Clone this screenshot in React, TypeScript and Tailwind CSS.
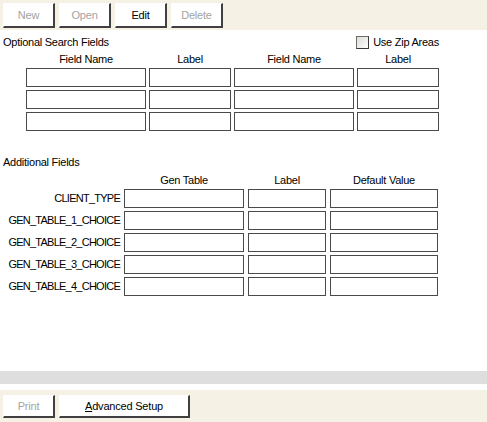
import React from 'react';

const font = { fontFamily: '"Liberation Sans", Arial, sans-serif' };

const Btn = ({ label, disabled, width, height = 'h-[25px]', children }: { label?: string; disabled?: boolean; width: string; height?: string; children?: React.ReactNode }) => (
  <button
    className={`${width} ${height} bg-white border-t border-l border-t-white border-l-white border-r-2 border-b-2 border-r-[#404040] border-b-[#404040] text-[11px] leading-none tracking-[-0.2px] ${disabled ? 'text-[#a3a3a3]' : 'text-black'}`}
    style={font}
  >
    {children ?? label}
  </button>
);

const Field = ({ w }: { w: string }) => <div className={`${w} h-[19px] border border-[#4a4a4a] bg-white`} />;

const searchCols = ['w-[120px]', 'w-[82px]', 'w-[120px]', 'w-[82px]'];
const searchHeads = ['Field Name', 'Label', 'Field Name', 'Label'];
const extraRows = ['CLIENT_TYPE', 'GEN_TABLE_1_CHOICE', 'GEN_TABLE_2_CHOICE', 'GEN_TABLE_3_CHOICE', 'GEN_TABLE_4_CHOICE'];

export default function App() {
  return (
    <div className="w-[487px] h-[422px] flex flex-col bg-white text-[11px] tracking-[-0.25px] text-black overflow-hidden" style={font}>
      {/* top toolbar */}
      <div className="h-[30px] bg-[#f5f1e5] flex items-start gap-[4px] pl-[3px] pt-[3px]">
        <Btn label="New" disabled width="w-[52px]" />
        <Btn label="Open" disabled width="w-[52px]" />
        <Btn label="Edit" width="w-[52px]" />
        <Btn label="Delete" disabled width="w-[52px]" />
      </div>

      <div className="flex-1">
        <div className="flex items-center h-[16px] mt-[4px] pl-[3px]">
          <span>Optional Search Fields</span>
          <div className="ml-auto mr-[48px] flex items-center gap-[4px]">
            <span className="w-[13px] h-[13px] border border-[#6e6e6e] border-r-[#3a3a3a] border-b-[#3a3a3a] bg-gradient-to-br from-[#dcdcd7] to-white" />
            <span>Use Zip Areas</span>
          </div>
        </div>

        <div className="ml-[26px] mt-[3px] grid grid-cols-[120px_82px_120px_82px] gap-x-[3px] gap-y-[3px]">
          {searchHeads.map((h, i) => (
            <div key={i} className="h-[12px] leading-[12px] text-center">{h}</div>
          ))}
          {[0, 1, 2].map(r =>
            searchCols.map((w, i) => <Field key={`${r}-${i}`} w={w} />)
          )}
        </div>

        <div className="pl-[3px] mt-[24px] h-[14px] leading-[14px]">Additional Fields</div>

        <div className="mt-[5px] grid grid-cols-[120px_120px_78px_108px] gap-x-[4px] gap-y-[3px]">
          <div />
          <div className="h-[12px] leading-[12px] text-center">Gen Table</div>
          <div className="h-[12px] leading-[12px] text-center">Label</div>
          <div className="h-[12px] leading-[12px] text-center">Default Value</div>
          {extraRows.map(name => (
            <React.Fragment key={name}>
              <div className="h-[19px] flex items-center justify-end tracking-[-0.75px] whitespace-nowrap">{name}</div>
              <Field w="w-[120px]" />
              <Field w="w-[78px]" />
              <Field w="w-[108px]" />
            </React.Fragment>
          ))}
        </div>
      </div>

      <div className="h-[13px] bg-[#dedede]" />
      <div className="h-[6px] bg-white" />
      {/* bottom toolbar */}
      <div className="h-[32px] bg-[#f5f1e5] flex items-start gap-[4px] pl-[3px] pt-[5px]">
        <Btn label="Print" disabled width="w-[52px]" height="h-[23px]" />
        <Btn width="w-[131px]" height="h-[23px]">
          <span className="underline">A</span>dvanced Setup
        </Btn>
      </div>
    </div>
  );
}
